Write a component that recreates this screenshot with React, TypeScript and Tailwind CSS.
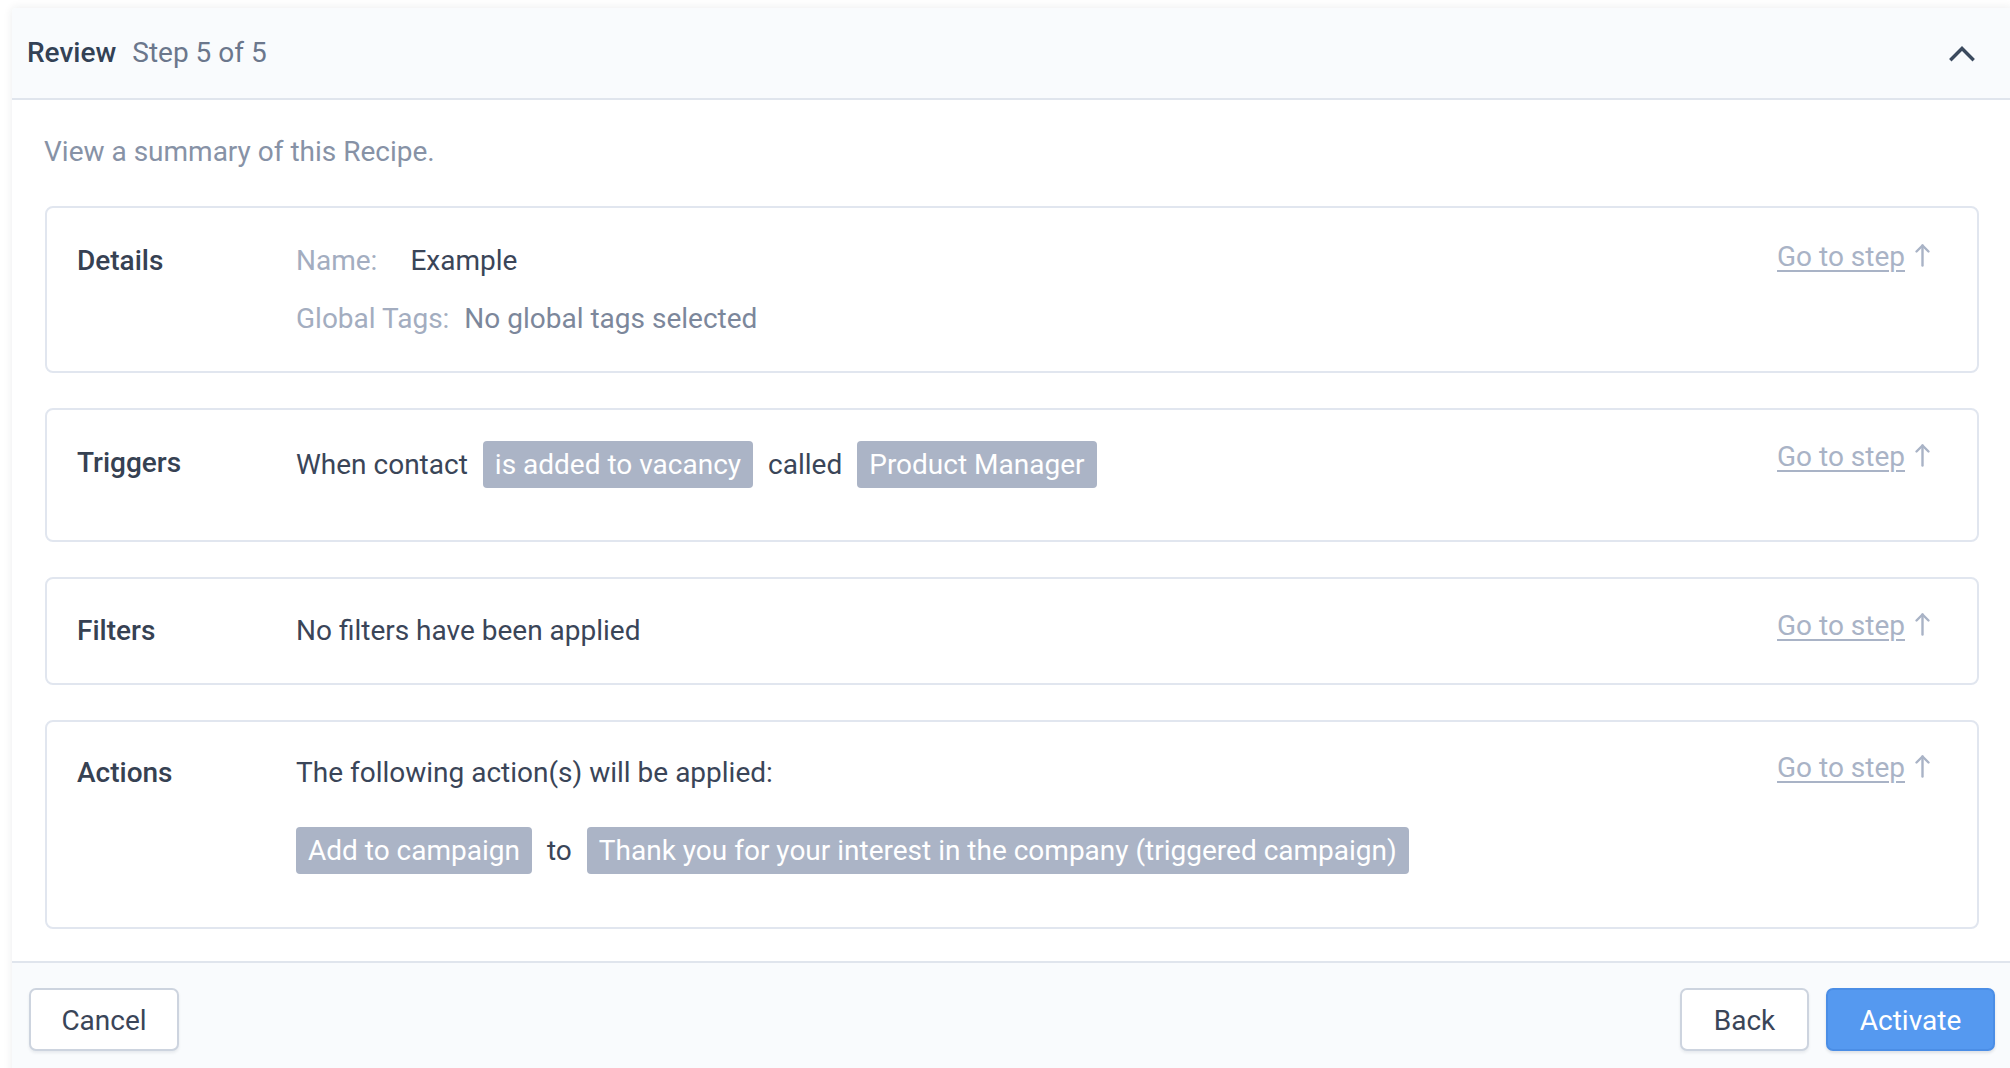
import React from "react";

function GoToStep({ mt }: { mt: string }) {
  return (
    <div className={`flex items-center self-start leading-[40px] text-[#a9b3c6] shrink-0 ${mt}`}>
      <span className="underline decoration-2 underline-offset-[4px]">Go to step</span>
      <svg width="17" height="24" viewBox="0 0 17 24" className="ml-[9px] -mt-[4px]" fill="none" stroke="#a9b3c6" strokeWidth="2.4" strokeLinecap="round" strokeLinejoin="round">
        <path d="M8.5 22.5V2.5" />
        <path d="M2.5 8.5L8.5 2.5L14.5 8.5" />
      </svg>
    </div>
  );
}

function Chip({ children }: { children: React.ReactNode }) {
  return (
    <span className="bg-[#abb4c6] text-white px-[12px] leading-[47px] h-[47px] rounded-[4px] whitespace-nowrap">
      {children}
    </span>
  );
}

function Card({ label, children, pad, linkMt }: { label: string; children: React.ReactNode; pad: string; linkMt: string }) {
  return (
    <div className={`flex rounded-[8px] border-2 border-[#e1e6ef] bg-white pl-[30px] pr-[46px] ${pad}`}>
      <div className="w-[219px] shrink-0 font-medium text-[#364152] leading-[44px]">{label}</div>
      <div className="flex-1 min-w-0">{children}</div>
      <GoToStep mt={linkMt} />
    </div>
  );
}

export default function App() {
  return (
    <div className="w-[2010px] h-[1068px] overflow-hidden bg-white pt-[8px] pl-[12px] font-[Roboto,'Liberation_Sans',sans-serif] text-[28px] text-[#3a4558]">
      <div className="w-[2000px] h-[1100px] bg-white rounded-tl-[4px] shadow-[0_0_10px_rgba(30,41,59,0.09)] flex flex-col">
        {/* Header */}
        <div className="h-[92px] bg-[#f9fbfd] border-b-2 border-[#e0e5ed] flex items-center pl-[15px] pr-[37px] rounded-tl-[4px]">
          <span className="font-medium text-[#334155]">Review</span>
          <span className="ml-[16px] text-[#6b778c]">Step 5 of 5</span>
          <div className="flex-1" />
          <svg width="26" height="17" viewBox="0 0 26 17" fill="none" stroke="#3b4a5e" strokeWidth="3.4" strokeLinecap="square" strokeLinejoin="miter">
            <path d="M2.5 14L13 3.5L23.5 14" />
          </svg>
        </div>

        {/* Body */}
        <div className="pt-[31px] pb-[32px] px-[33px] bg-white">
          <p className="leading-[42px] text-[#8792a6] mb-[33px] -ml-[1px]">View a summary of this Recipe.</p>
          <div className="flex flex-col gap-[35px]">
            <Card label="Details" pad="pt-[31px] pb-[30px]" linkMt="-mt-[2px]">
              <div className="leading-[44px] flex">
                <span className="text-[#a3adc0] mr-[33px]">Name:</span>
                <span className="text-[#3a4558]">Example</span>
              </div>
              <div className="leading-[44px] flex mt-[14px]">
                <span className="text-[#a3adc0] mr-[15px]">Global Tags:</span>
                <span className="text-[#7c879b]">No global tags selected</span>
              </div>
            </Card>

            <Card label="Triggers" pad="pt-[31px] pb-[29px]" linkMt="-mt-[4px]">
              <div className="flex items-center gap-[15px] mb-[23px] whitespace-nowrap">
                <span>When contact</span>
                <Chip>is added to vacancy</Chip>
                <span>called</span>
                <Chip>Product Manager</Chip>
              </div>
            </Card>

            <Card label="Filters" pad="pt-[30px] pb-[30px]" linkMt="-mt-[3px]">
              <div className="leading-[44px]">No filters have been applied</div>
            </Card>

            <Card label="Actions" pad="pt-[29px] pb-[30px]" linkMt="-mt-[3px]">
              <div className="leading-[44px]">The following action(s) will be applied:</div>
              <div className="flex items-center gap-[15px] mt-[32px] mb-[23px] whitespace-nowrap">
                <Chip>Add to campaign</Chip>
                <span>to</span>
                <Chip>Thank you for your interest in the company (triggered campaign)</Chip>
              </div>
            </Card>
          </div>
        </div>

        {/* Footer */}
        <div className="border-t-2 border-[#e0e5ed] bg-[#f9fbfd] flex-1 flex items-start pt-[25px] px-[17px]">
          <button className="w-[150px] h-[63px] rounded-[7px] border-2 border-[#cdd4df] bg-white text-[#3a4558] pt-[2px] shadow-[0_2px_3px_rgba(30,41,59,0.08)]">
            Cancel
          </button>
          <div className="flex-1" />
          <button className="w-[129px] h-[63px] rounded-[7px] border-2 border-[#cdd4df] bg-white text-[#3a4558] pt-[2px] shadow-[0_2px_3px_rgba(30,41,59,0.08)]">
            Back
          </button>
          <button className="ml-[17px] w-[169px] h-[63px] rounded-[7px] border-2 border-[#4b8ee6] bg-[#5599f0] text-white pt-[2px] shadow-[0_2px_3px_rgba(30,41,59,0.12)]">
            Activate
          </button>
        </div>
      </div>
    </div>
  );
}
